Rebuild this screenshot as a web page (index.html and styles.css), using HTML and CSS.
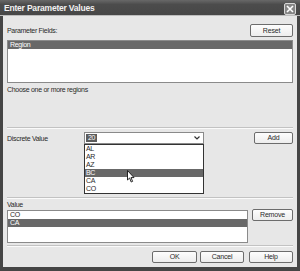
FILE: index.html
```html
<!DOCTYPE html>
<html lang="en">
<head>
    <meta charset="UTF-8">
    <title>Enter Parameter Values</title>
    <link rel="stylesheet" href="styles.css">
</head>
<body>
    <div class="dialog">
        <div class="titlebar">
            <span class="title">Enter Parameter Values</span>
            <span class="close">
                <svg width="8" height="8" viewBox="0 0 8 8"><path d="M1 1 L7 7 M7 1 L1 7" stroke="#fff" stroke-width="1.6"/></svg>
            </span>
        </div>
        <div class="content">
            <div class="row top-row">
                <span class="label">Parameter Fields:</span>
                <button class="btn btn-reset">Reset</button>
            </div>
            <ul class="listbox fields">
                <li class="selected">Region</li>
            </ul>
            <p class="hint">Choose one or more regions</p>
            <hr class="sep sep-1">
            <div class="row discrete-row">
                <span class="label discrete-label">Discrete Value</span>
                <div class="combo">
                    <span class="combo-text">20</span>
                    <svg class="combo-arrow" width="6" height="4" viewBox="0 0 6 4"><path d="M0.5 0.5 L3 3 L5.5 0.5" fill="none" stroke="#333" stroke-width="1.2"/></svg>
                    <ul class="dropdown">
                        <li>AL</li>
                        <li>AR</li>
                        <li>AZ</li>
                        <li class="selected">BC</li>
                        <li>CA</li>
                        <li>CO</li>
                    </ul>
                    <!-- mouse pointer over the list -->
                    <svg class="cursor" width="8" height="13" viewBox="0 0 8 13"><path d="M0.5 0.5 L0.5 10 L2.6 8 L4.2 12 L5.6 11.4 L4 7.6 L7 7.6 Z" fill="#fff" stroke="#111" stroke-width="0.9" stroke-linejoin="round"/></svg>
                </div>
                <button class="btn btn-add">Add</button>
            </div>
            <hr class="sep sep-2">
            <span class="label value-label">Value</span>
            <div class="row value-row">
                <ul class="listbox values">
                    <li>CO</li>
                    <li class="selected">CA</li>
                </ul>
                <button class="btn btn-remove">Remove</button>
            </div>
            <hr class="sep sep-3">
            <div class="row actions">
                <button class="btn btn-ok">OK</button>
                <button class="btn btn-cancel">Cancel</button>
                <button class="btn btn-help">Help</button>
            </div>
        </div>
    </div>
</body>
</html>
```

FILE: styles.css
```css
* {
    box-sizing: border-box;
}
body {
    margin: 0;
    font-family: 'Liberation Sans', Arial, sans-serif;
    font-size: 7px;
    letter-spacing: -0.3px;
    color: #2a2a2a;
    background: #3a3a3a;
}
.dialog {
    width: 300px;
    height: 271px;
    display: flex;
    flex-direction: column;
    background: #e7e7e7;
    border: 3px solid #454545;
    border-top: none;
    border-bottom-width: 4px;
}
.titlebar {
    height: 16px;
    margin: 0 -3px;
    padding: 0 4px 0 4px;
    display: flex;
    align-items: center;
    justify-content: space-between;
    background: linear-gradient(#686868, #4c4c4c 30%, #474747);
    border-bottom: 1px solid #bdbdbd;
}
.title {
    color: #f2f2f2;
    font-weight: bold;
    font-size: 8.5px;
    letter-spacing: -0.2px;
}
.close {
    width: 12px;
    height: 12px;
    margin-top: 2px;
    display: flex;
    align-items: center;
    justify-content: center;
    background: #858585;
    border: 1px solid #d8d8d8;
    border-radius: 2px;
}
.content {
    flex: 1;
    display: flex;
    flex-direction: column;
    padding: 0 4px;
}
.row {
    display: flex;
    align-items: center;
}
.label {
    line-height: 9px;
}
.btn {
    font-family: inherit;
    font-size: 7px;
    letter-spacing: -0.2px;
    color: #2a2a2a;
    height: 12px;
    padding: 0;
    background: linear-gradient(#fdfdfd, #ededed);
    border: 1px solid #6c6c6c;
    border-radius: 2px;
    line-height: 10px;
}
.top-row {
    margin-top: 8px;
    height: 13px;
    justify-content: space-between;
}
.btn-reset {
    width: 43px;
    height: 13px;
}
.listbox {
    list-style: none;
    margin: 0;
    padding: 0;
    background: #fff;
    border: 1px solid #8a8a8a;
}
.listbox li {
    height: 8px;
    line-height: 8px;
    padding-left: 2px;
}
.listbox li.selected,
.dropdown li.selected {
    background: #686868;
    color: #fff;
}
.fields {
    margin-top: 3px;
    height: 43px;
}
.hint {
    margin: 2px 0 0 0;
    line-height: 9px;
}
.sep {
    margin: 0;
    height: 2px;
    border: none;
    border-top: 1px solid #c2c2c2;
    border-bottom: 1px solid #fafafa;
}
.sep-1 {
    margin-top: 33px;
}
.discrete-row {
    margin-top: 3px;
    height: 12px;
    align-items: flex-start;
}
.discrete-label {
    width: 77px;
    margin-top: 2px;
}
.combo {
    position: relative;
    width: 120px;
    height: 12px;
    display: flex;
    align-items: center;
    justify-content: space-between;
    padding: 0 2px 0 1px;
    background: #fff;
    border: 1px solid #8a8a8a;
}
.combo-text {
    background: #5c5c5c;
    color: #fff;
    padding: 0 2px;
    line-height: 8px;
}
.combo-arrow {
    margin-right: 1px;
}
.dropdown {
    position: absolute;
    left: -1px;
    top: 11px;
    width: 120px;
    height: 50px;
    list-style: none;
    margin: 0;
    padding: 0;
    background: #fff;
    border: 1px solid #333;
}
.dropdown li {
    height: 8px;
    line-height: 8px;
    padding-left: 1px;
}
.cursor {
    position: absolute;
    left: 42px;
    top: 37px;
}
.btn-add {
    margin-left: auto;
    width: 39px;
}
.sep-2 {
    margin-top: 53px;
}
.value-label {
    margin-top: 1px;
}
.value-row {
    align-items: flex-start;
    justify-content: space-between;
}
.values {
    margin-top: 1px;
    width: 241px;
    height: 33px;
}
.btn-remove {
    width: 41px;
}
.sep-3 {
    margin-top: 2px;
}
.actions {
    margin-top: 4px;
    justify-content: flex-end;
    gap: 3px;
}
.btn-ok {
    width: 45px;
}
.btn-cancel {
    width: 44px;
}
.btn-help {
    width: 44px;
    margin-left: 2px;
}
```
